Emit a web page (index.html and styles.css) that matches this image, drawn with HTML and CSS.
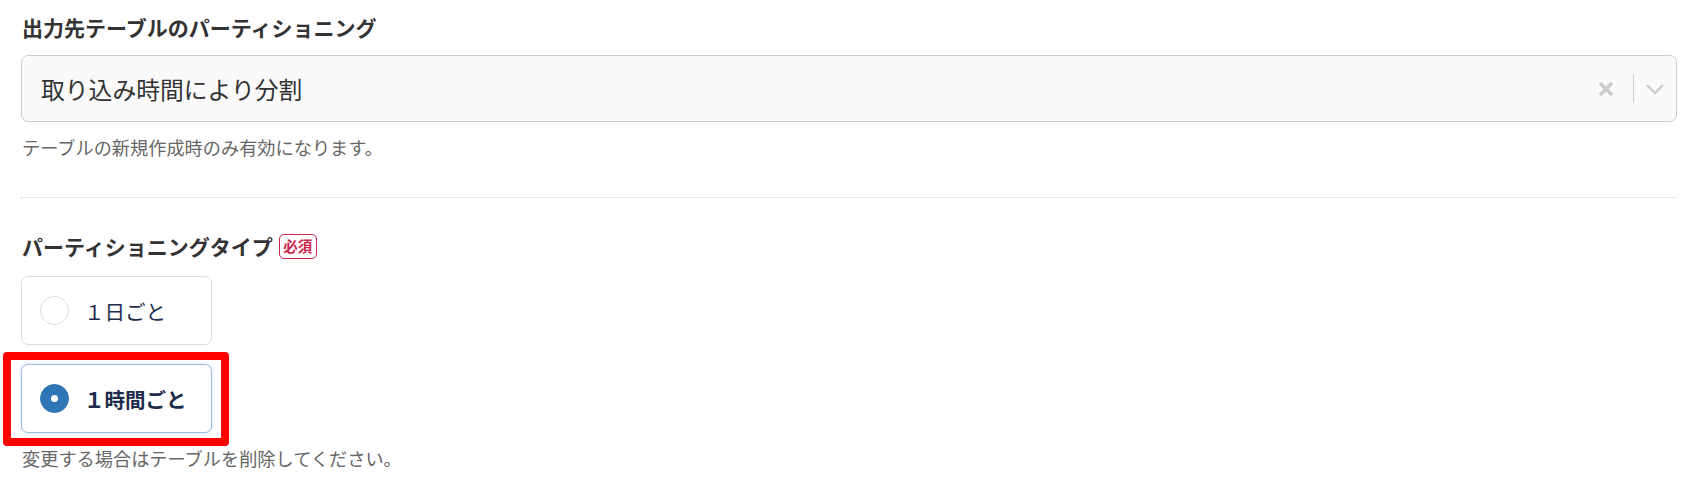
FILE: index.html
```html
<!DOCTYPE html>
<html lang="ja">
<head>
<meta charset="utf-8">
<link rel="stylesheet" href="styles.css">
</head>
<body>
<div class="page">
  <section class="field">
    <h2 class="label">出力先テーブルのパーティショニング</h2>
    <div class="select">
      <span class="select-value">取り込み時間により分割</span>
      <div class="select-controls">
        <svg class="icon-clear" width="16" height="16" viewBox="0 0 16 16"><path d="M2 2 L14 14 M14 2 L2 14" stroke="#cccccc" stroke-width="3.6" stroke-linecap="butt" fill="none"/></svg>
        <span class="select-sep"></span>
        <svg class="icon-chevron" width="20" height="12" viewBox="0 0 20 12"><path d="M2 2 L10 10 L18 2" stroke="#cccccc" stroke-width="2.4" fill="none"/></svg>
      </div>
    </div>
    <p class="help help-first">テーブルの新規作成時のみ有効になります。</p>
  </section>
  <hr class="divider">
  <section class="field">
    <h2 class="label label-second">パーティショニングタイプ<span class="badge">必須</span></h2>
    <div class="options">
      <label class="option">
        <span class="radio"></span>
        <span class="option-text">１日ごと</span>
      </label>
      <div class="option-wrap">
        <label class="option option-checked">
          <span class="radio radio-checked"><span class="radio-dot"></span></span>
          <span class="option-text">１時間ごと</span>
        </label>
        <span class="highlight"></span>
      </div>
    </div>
    <p class="help help-second">変更する場合はテーブルを削除してください。</p>
  </section>
</div>
</body>
</html>
```

FILE: styles.css
```css
* { box-sizing: border-box; }
html, body { margin: 0; padding: 0; background: #ffffff; }
body {
  font-family: "Noto Sans CJK JP", "Noto Sans", sans-serif;
  color: #333333;
}
.page {
  padding: 14px 25px 0 21px;
  width: 1702px;
}
.field { margin: 0; }
.label {
  margin: 0;
  font-size: 21px;
  line-height: 26px;
  font-weight: 700;
  color: #333333;
  padding-left: 1px;
  display: flex;
  align-items: center;
}
.select {
  margin-top: 15px;
  height: 67px;
  border: 1px solid #cccccc;
  border-radius: 7px;
  background: #fafafa;
  display: flex;
  align-items: center;
  padding-left: 19px;
}
.select-value {
  flex: 1;
  font-size: 23.8px;
  line-height: 30px;
  color: #333333;
}
.select-controls {
  display: flex;
  align-items: center;
  padding-right: 11px;
}
.icon-clear { display: block; margin-right: 19px; }
.select-sep {
  display: block;
  width: 1px;
  height: 29px;
  background: #cccccc;
  margin-right: 11px;
}
.icon-chevron { display: block; }
.help {
  margin: 0;
  font-size: 18.2px;
  line-height: 22px;
  color: #666666;
  padding-left: 1px;
}
.help-first { margin-top: 14px; }
.divider {
  margin: 39px 0 0 0;
  border: 0;
  border-top: 1px dotted #d4d4d4;
  height: 0;
}
.label-second { margin-top: 35px; }
.badge {
  display: inline-flex;
  align-items: center;
  justify-content: center;
  margin-left: 6px;
  width: 38px;
  height: 25px;
  border: 1.5px solid #c9264b;
  border-radius: 5px;
  color: #c9264b;
  font-size: 14.5px;
  font-weight: 700;
  line-height: 1;
}
.options {
  margin-top: 17px;
  display: flex;
  flex-direction: column;
  align-items: flex-start;
  gap: 19px;
}
.option-wrap { position: relative; }
.option {
  width: 191px;
  height: 69px;
  border: 1px solid #dddddd;
  border-radius: 7px;
  background: #ffffff;
  display: flex;
  align-items: center;
  padding-left: 18px;
  gap: 15px;
}
.option-checked {
  border-color: #9bbde0;
  box-shadow: 0 0 4px rgba(47, 116, 181, 0.18);
}
.radio {
  width: 29px;
  height: 29px;
  border-radius: 50%;
  border: 1px solid #dddddd;
  background: #ffffff;
  flex: none;
  display: flex;
  align-items: center;
  justify-content: center;
}
.radio-checked {
  background: #2f74b5;
  border-color: #2f74b5;
}
.radio-dot {
  width: 7px;
  height: 7px;
  border-radius: 50%;
  background: #ffffff;
}
.option-text {
  font-size: 20.5px;
  line-height: 26px;
  color: #1d2b4c;
}
.option-checked .option-text { font-weight: 700; }
.highlight {
  position: absolute;
  left: -18px;
  top: -12px;
  width: 226px;
  height: 94px;
  border: 8px solid #ff0000;
  border-radius: 4px;
  pointer-events: none;
}
.help-second { margin-top: 14px; }
```
